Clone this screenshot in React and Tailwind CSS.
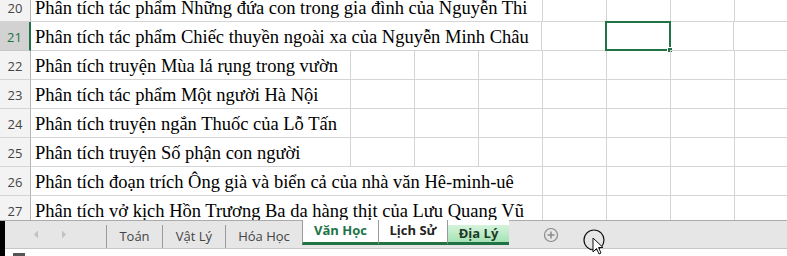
import React from 'react';

const rows = [
    { n: 20, text: 'Phân tích tác phẩm Những đứa con trong gia đình của Nguyễn Thi', span: 8 },
    { n: 21, text: 'Phân tích tác phẩm Chiếc thuyền ngoài xa của Nguyễn Minh Châu', span: 8, active: true },
    { n: 22, text: 'Phân tích truyện Mùa lá rụng trong vườn', span: 5 },
    { n: 23, text: 'Phân tích tác phẩm Một người Hà Nội', span: 5 },
    { n: 24, text: 'Phân tích truyện ngắn Thuốc của Lỗ Tấn', span: 5 },
    { n: 25, text: 'Phân tích truyện Số phận con người', span: 5 },
    { n: 26, text: 'Phân tích đoạn trích Ông già và biển cả của nhà văn Hê-minh-uê', span: 8 },
    { n: 27, text: 'Phân tích vở kịch Hồn Trương Ba da hàng thịt của Lưu Quang Vũ', span: 8 },
];

const TOTAL_COLS = 12;
const SELECTED_COL = 9;

function Row({ row }) {
    const rest = [];
    for (let i = row.span; i < TOTAL_COLS; i++) rest.push(i);
    return (
        <div className="flex h-[29px] shrink-0">
            <div
                className={
                    row.active
                        ? 'w-[31px] shrink-0 flex items-end justify-center pb-[3px] bg-[#d2d2d2] border-b border-[#c6c6c6] border-r-2 border-r-[#217346] text-[#217346] text-[13px]'
                        : 'w-[31px] shrink-0 flex items-end justify-center pb-[3px] bg-[#f3f3f3] border-b border-[#d4d4d4] border-r border-r-[#b6b6b6] text-[#444] text-[13px]'
                }
                style={{ fontFamily: '"Open Sans", "Noto Sans", sans-serif' }}
            >
                {row.n}
            </div>
            <div
                className="shrink-0 border-b border-r border-[#d4d4d4] flex items-end pl-[4px] pb-[1px] whitespace-nowrap text-[18.5px] leading-[24px] text-black"
                style={{ width: row.span * 64 - (row.active ? 1 : 0), fontFamily: '"Liberation Serif", "Times New Roman", serif' }}
            >
                {row.text}
            </div>
            {rest.map((c) => (
                <div key={c} className="relative w-[64px] shrink-0 border-b border-r border-[#d4d4d4]">
                    {row.active && c === SELECTED_COL && (
                        <div className="absolute -left-[1px] -top-[1px] w-[66px] h-[30px] border-2 border-[#217346]">
                            <div className="absolute -right-[4px] -bottom-[4px] w-[6px] h-[6px] bg-[#217346] border border-white" />
                        </div>
                    )}
                </div>
            ))}
        </div>
    );
}

function Tab({ label, className }) {
    return (
        <div className={'flex items-center justify-center h-full text-[13px] ' + className}>
            {label}
        </div>
    );
}

export default function App() {
    return (
        <div className="w-[787px] h-[256px] overflow-hidden bg-white flex flex-col select-none">
            <div className="h-[220px] shrink-0 overflow-hidden">
                <div className="-mt-[7px] flex flex-col">
                    {rows.map((r) => (
                        <Row key={r.n} row={r} />
                    ))}
                </div>
            </div>

            <div className="relative h-[29px] shrink-0 flex bg-[#e6e6e6] border-t border-[#ababab] border-b border-b-[#c6c6c6]" style={{ fontFamily: '"Open Sans", "Noto Sans", sans-serif' }}>
                <div className="w-[5px] h-[36px] bg-black shrink-0" />
                <div className="w-[101px] flex items-center gap-[22px] pl-[28px] shrink-0">
                    <svg width="6" height="9" viewBox="0 0 6 9"><path d="M5 0.5 L1 4.5 L5 8.5 Z" fill="#c2c2c2" /></svg>
                    <svg width="6" height="9" viewBox="0 0 6 9"><path d="M1 0.5 L5 4.5 L1 8.5 Z" fill="#c2c2c2" /></svg>
                </div>
                <div className="flex h-[23px] mt-[4px]">
                    <Tab label="Toán" className="w-[56px] border-l border-[#9a9a9a] text-[#444]" />
                    <Tab label="Vật Lý" className="w-[63px] border-l border-[#9a9a9a] text-[#444]" />
                    <Tab label="Hóa Học" className="w-[77px] border-l border-[#9a9a9a] text-[#444]" />
                </div>
                <div className="flex h-[25px] -mt-[1px]">
                    <Tab label="Văn Học" className="w-[76px] bg-white border-l border-[#9a9a9a] border-b-[3px] border-b-[#217346] font-bold text-[#217346]" />
                    <Tab label="Lịch Sử" className="w-[69px] bg-white border-l border-[#9a9a9a] border-b-[3px] border-b-[#217346] font-bold text-[#222]" />
                    <div className="w-[62px] h-full border-l border-[#9a9a9a] border-b-[3px] border-b-[#217346] bg-white flex items-end">
                        <div className="w-full h-[17px] bg-gradient-to-b from-[#d5f3dc] to-[#a4e3b4] flex items-center justify-center text-[13px] font-bold text-[#1f3b26]">
                            Địa Lý
                        </div>
                    </div>
                </div>
                <div className="flex items-center pl-[34px]">
                    <svg width="16" height="16" viewBox="0 0 16 16">
                        <circle cx="8" cy="8" r="6.5" fill="none" stroke="#8a8a8a" strokeWidth="1.2" />
                        <path d="M8 4.5 V11.5 M4.5 8 H11.5" stroke="#8a8a8a" strokeWidth="1.5" />
                    </svg>
                </div>
                <svg className="absolute left-[583px] top-[7px]" width="24" height="28" viewBox="0 0 24 28">
                    <circle cx="11" cy="12" r="10" fill="none" stroke="#111" strokeWidth="1.2" />
                    <path d="M10 10 L10 24 L13.5 20.5 L16 26 L18 25 L15.5 19.5 L20 19.5 Z" fill="#fff" stroke="#111" strokeWidth="1" strokeLinejoin="round" />
                </svg>
            </div>

            <div className="flex-1 flex items-end bg-white">
                <div className="w-[5px] h-full bg-black" />
                <div className="ml-[8px] w-[12px] h-[3px] bg-[#555]" />
            </div>
        </div>
    );
}
